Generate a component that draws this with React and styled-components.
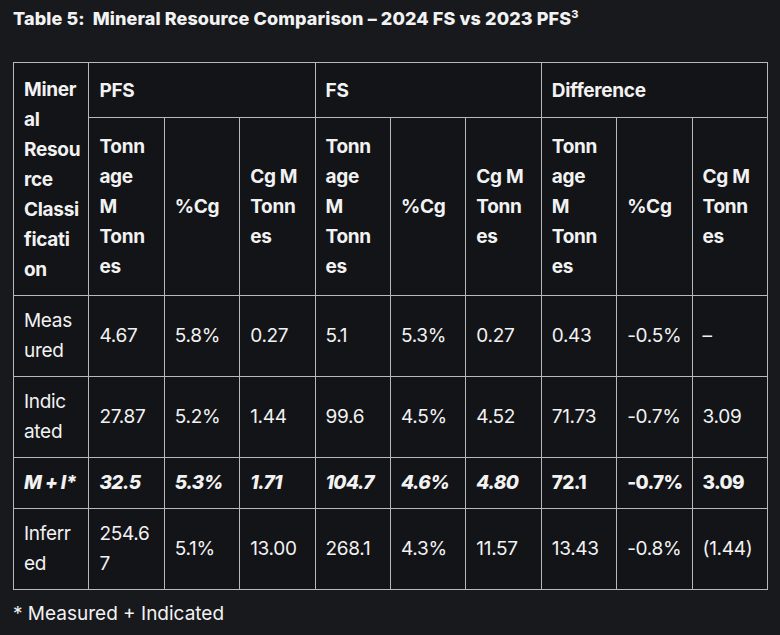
import styled, { createGlobalStyle } from "styled-components";

const GlobalStyle = createGlobalStyle`
  html, body {
    margin: 0;
    padding: 0;
    background: #17191d;
  }
  body {
    font-family: Inter, "Open Sans", sans-serif;
    color: #f2f2f2;
  }
`;

// "|" marks where the cell text wraps in the source table
const groups = ["PFS", "FS", "Difference"];
const subHeads = ["Tonn|age|M|Tonn|es", "%Cg", "Cg M|Tonn|es"];

const rows = [
  { label: "Meas|ured", values: ["4.67", "5.8%", "0.27", "5.1", "5.3%", "0.27", "0.43", "-0.5%", "–"] },
  { label: "Indic|ated", values: ["27.87", "5.2%", "1.44", "99.6", "4.5%", "4.52", "71.73", "-0.7%", "3.09"] },
  { label: "M + I*", total: true, values: ["32.5", "5.3%", "1.71", "104.7", "4.6%", "4.80", "72.1", "-0.7%", "3.09"] },
  { label: "Inferr|ed", values: ["254.6|7", "5.1%", "13.00", "268.1", "4.3%", "11.57", "13.43", "-0.8%", "(1.44)"] },
];

const Lines = ({ text }) =>
  text.split("|").map((part, i) => (
    <span key={i}>
      {i > 0 && <br />}
      {part}
    </span>
  ));

const App = () => {
  return (
    <Page>
      <GlobalStyle />
      <Title>
        Table 5:&nbsp; Mineral Resource Comparison – 2024 FS vs 2023 PFS<sup>3</sup>
      </Title>
      <Table>
        <colgroup>
          {Array.from({ length: 10 }).map((_, i) => (
            <col key={i} />
          ))}
        </colgroup>
        <thead>
          <tr>
            <HeadCell rowSpan={2} top>
              <Lines text="Miner|al|Resou|rce|Classi|ficati|on" />
            </HeadCell>
            {groups.map((g) => (
              <HeadCell key={g} colSpan={3}>{g}</HeadCell>
            ))}
          </tr>
          <tr>
            {groups.map((g) =>
              subHeads.map((s) => (
                <HeadCell key={g + s}>
                  <Lines text={s} />
                </HeadCell>
              ))
            )}
          </tr>
        </thead>
        <tbody>
          {rows.map((r) => (
            <tr key={r.label}>
              <Cell bold={r.total} italic={r.total}>
                <Lines text={r.label} />
              </Cell>
              {r.values.map((v, i) => (
                <Cell key={i} bold={r.total} italic={r.total && i < 6}>
                  <Lines text={v} />
                </Cell>
              ))}
            </tr>
          ))}
        </tbody>
      </Table>
      <Note>* Measured + Indicated</Note>
    </Page>
  );
};

const Page = styled.div`
  padding: 4px 12px 12px 13px;
`;

const Title = styled.h1`
  margin: 0 0 28px;
  font-size: 18px;
  font-weight: 800;
  line-height: 30px;
  letter-spacing: 0.1px;
  white-space: nowrap;

  sup {
    font-size: 11px;
    line-height: 0;
    vertical-align: 7px;
  }
`;

const Table = styled.table`
  width: 755px;
  table-layout: fixed;
  border-collapse: collapse;
  border: 1px solid #b8b8b8;
  background: #131418;
  font-size: 19px;
  line-height: 30px;
  letter-spacing: -0.3px;
`;

const HeadCell = styled.th`
  border: 1px solid #b8b8b8;
  padding: 12px 10px 10px;
  text-align: left;
  vertical-align: ${(props) => (props.top ? "top" : "middle")};
  font-weight: 700;
  white-space: nowrap;
`;

const Cell = styled.td`
  border: 1px solid #b8b8b8;
  padding: 10px 10px;
  vertical-align: middle;
  font-weight: ${(props) => (props.bold ? 800 : 400)};
  font-style: ${(props) => (props.italic ? "italic" : "normal")};
  letter-spacing: ${(props) => (props.bold ? "-0.6px" : "-0.3px")};
  white-space: nowrap;
`;

const Note = styled.p`
  margin: 11px 0 0;
  font-size: 19px;
  line-height: 26px;
`;

export default App;
